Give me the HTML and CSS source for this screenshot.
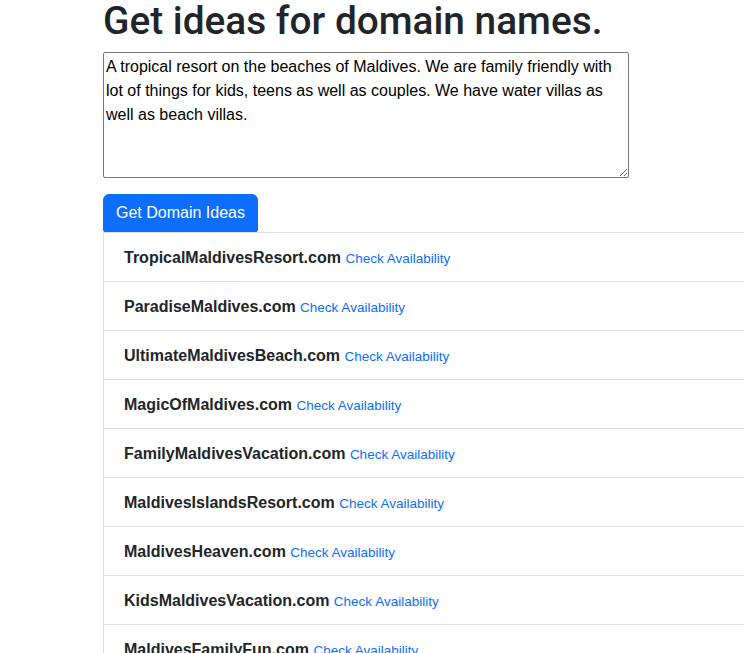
FILE: index.html
```html
<!DOCTYPE html>
<html lang="en">
<head>
    <meta charset="UTF-8">
    <title>Domain Name Ideas</title>
    <link rel="stylesheet" href="styles.css">
</head>
<body>
    <div class="container">
        <h1>Get ideas for domain names.</h1>
        <form class="idea-form">
            <textarea class="prompt">A tropical resort on the beaches of Maldives. We are family friendly with lot of things for kids, teens as well as couples. We have water villas as well as beach villas.</textarea>
            <button type="button" class="btn">Get Domain Ideas</button>
        </form>

        <!-- Results -->
        <ul class="list-group">
            <li class="list-item"><b>TropicalMaldivesResort.com</b> <a href="#">Check Availability</a></li>
            <li class="list-item"><b>ParadiseMaldives.com</b> <a href="#">Check Availability</a></li>
            <li class="list-item"><b>UltimateMaldivesBeach.com</b> <a href="#">Check Availability</a></li>
            <li class="list-item"><b>MagicOfMaldives.com</b> <a href="#">Check Availability</a></li>
            <li class="list-item"><b>FamilyMaldivesVacation.com</b> <a href="#">Check Availability</a></li>
            <li class="list-item"><b>MaldivesIslandsResort.com</b> <a href="#">Check Availability</a></li>
            <li class="list-item"><b>MaldivesHeaven.com</b> <a href="#">Check Availability</a></li>
            <li class="list-item"><b>KidsMaldivesVacation.com</b> <a href="#">Check Availability</a></li>
            <li class="list-item"><b>MaldivesFamilyFun.com</b> <a href="#">Check Availability</a></li>
            <li class="list-item"><b>MaldivesBeachVillas.com</b> <a href="#">Check Availability</a></li>
        </ul>
    </div>
</body>
</html>
```

FILE: styles.css
```css
html {
    overflow: hidden;
}

body {
    margin: 0;
    font-family: "Liberation Sans", Arial, sans-serif;
    font-size: 16px;
    line-height: 1.5;
    color: #212529;
    background-color: #fff;
}

.container {
    padding-left: 103px;
}

h1 {
    margin: -3px 0 7px;
    font-family: Roboto, "Liberation Sans", sans-serif;
    font-size: 38.8px;
    font-weight: 500;
    line-height: 48px;
}

.idea-form {
    display: flex;
    flex-direction: column;
    align-items: flex-start;
    gap: 16px;
}

.prompt {
    box-sizing: border-box;
    width: 526px;
    height: 126px;
    padding: 2px;
    font-family: "Liberation Sans", Arial, sans-serif;
    font-size: 16px;
    line-height: 24px;
    color: #000;
    border: 1px solid #767676;
    border-radius: 2px;
    resize: vertical;
}

.btn {
    padding: 6px 12px;
    font-family: inherit;
    font-size: 16px;
    line-height: 24px;
    color: #fff;
    background-color: #0d6efd;
    border: 1px solid #0d6efd;
    border-radius: 6px 6px 2px 2px;
    cursor: pointer;
}

.list-group {
    width: 700px;
    margin: 0;
    padding: 0;
    list-style: none;
}

.list-item {
    padding: 13px 20px 11px;
    border: 1px solid #dee2e6;
    border-top: none;
}

.list-item:first-child {
    border-top: 1px solid #dee2e6;
}

.list-item b {
    font-weight: 700;
}

.list-item a {
    font-size: 13.5px;
    color: #0d6efd;
    text-decoration: none;
}
```
